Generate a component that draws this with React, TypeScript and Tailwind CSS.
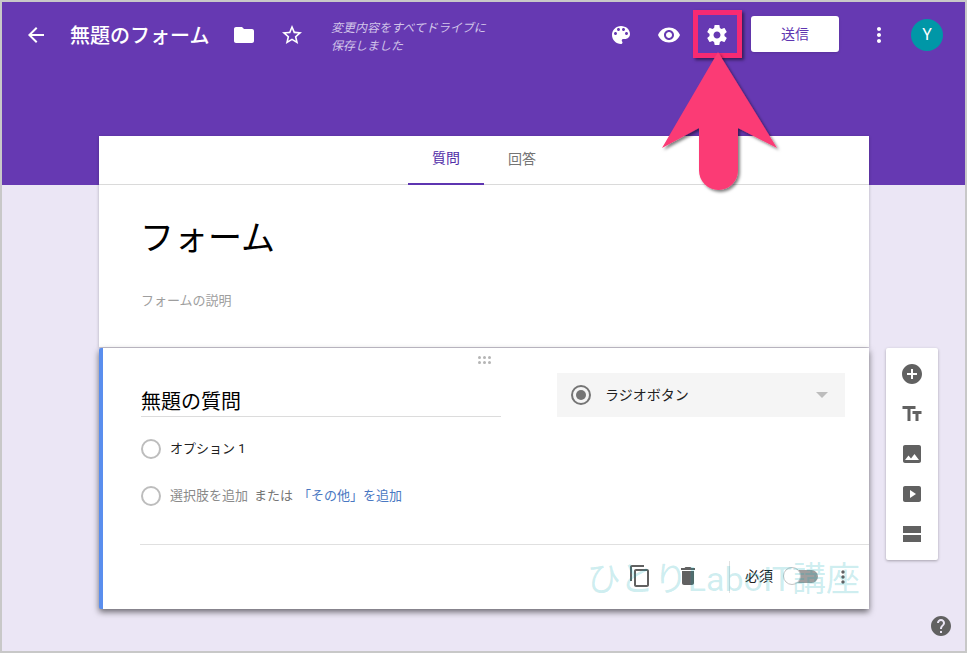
import React from "react";

const jp = "font-['Roboto','Noto_Sans_CJK_JP',sans-serif]";

function Icon({ d, className = "", size = 24 }: { d: string; className?: string; size?: number }) {
  return (
    <svg viewBox="0 0 24 24" width={size} height={size} className={className} fill="currentColor">
      <path d={d} />
    </svg>
  );
}

const paths = {
  back: "M20 11H7.83l5.59-5.59L12 4l-8 8 8 8 1.41-1.41L7.83 13H20v-2z",
  folder: "M10 4H4c-1.1 0-2 .9-2 2v12c0 1.1.9 2 2 2h16c1.1 0 2-.9 2-2V8c0-1.1-.9-2-2-2h-8l-2-2z",
  star: "M22 9.24l-7.19-.62L12 2 9.19 8.63 2 9.24l5.46 4.73L5.82 21 12 17.27 18.18 21l-1.63-7.03L22 9.24zM12 15.4l-3.76 2.27 1-4.28-3.32-2.88 4.38-.38L12 6.1l1.71 4.04 4.38.38-3.32 2.88 1 4.28L12 15.4z",
  palette: "M12 3c-4.97 0-9 4.03-9 9s4.03 9 9 9c.83 0 1.5-.67 1.5-1.5 0-.39-.15-.74-.39-1.01-.23-.26-.38-.61-.38-.99 0-.83.67-1.5 1.5-1.5H16c2.76 0 5-2.24 5-5 0-4.42-4.03-8-9-8zm-5.5 9c-.83 0-1.5-.67-1.5-1.5S5.67 9 6.5 9 8 9.67 8 10.5 7.33 12 6.5 12zm3-4C8.67 8 8 7.33 8 6.5S8.67 5 9.5 5s1.5.67 1.5 1.5S10.33 8 9.5 8zm5 0c-.83 0-1.5-.67-1.5-1.5S13.67 5 14.5 5s1.5.67 1.5 1.5S15.33 8 14.5 8zm3 4c-.83 0-1.5-.67-1.5-1.5S16.67 9 17.5 9s1.5.67 1.5 1.5-.67 1.5-1.5 1.5z",
  eye: "M12 4.5C7 4.5 2.73 7.61 1 12c1.73 4.39 6 7.5 11 7.5s9.27-3.11 11-7.5c-1.73-4.39-6-7.5-11-7.5zM12 17c-2.76 0-5-2.24-5-5s2.24-5 5-5 5 2.24 5 5-2.24 5-5 5zm0-8c-1.66 0-3 1.34-3 3s1.34 3 3 3 3-1.34 3-3-1.34-3-3-3z",
  gear: "M19.43 12.98c.04-.32.07-.64.07-.98s-.03-.66-.07-.98l2.11-1.65c.19-.15.24-.42.12-.64l-2-3.46c-.12-.22-.39-.3-.61-.22l-2.49 1c-.52-.4-1.08-.73-1.69-.98l-.38-2.65C14.46 2.18 14.25 2 14 2h-4c-.25 0-.46.18-.49.42l-.38 2.65c-.61.25-1.17.59-1.69.98l-2.49-1c-.23-.09-.49 0-.61.22l-2 3.46c-.13.22-.07.49.12.64l2.11 1.65c-.04.32-.07.65-.07.98s.03.66.07.98l-2.11 1.65c-.19.15-.24.42-.12.64l2 3.46c.12.22.39.3.61.22l2.49-1c.52.4 1.08.73 1.69.98l.38 2.65c.03.24.24.42.49.42h4c.25 0 .46-.18.49-.42l.38-2.65c.61-.25 1.17-.59 1.69-.98l2.49 1c.23.09.49 0 .61-.22l2-3.46c.12-.22.07-.49-.12-.64l-2.11-1.65zM12 15.5c-1.93 0-3.5-1.57-3.5-3.5s1.57-3.5 3.5-3.5 3.5 1.57 3.5 3.5-1.57 3.5-3.5 3.5z",
  dots: "M12 8c1.1 0 2-.9 2-2s-.9-2-2-2-2 .9-2 2 .9 2 2 2zm0 2c-1.1 0-2 .9-2 2s.9 2 2 2 2-.9 2-2-.9-2-2-2zm0 6c-1.1 0-2 .9-2 2s.9 2 2 2 2-.9 2-2-.9-2-2-2z",
  add: "M12 2C6.48 2 2 6.48 2 12s4.48 10 10 10 10-4.48 10-10S17.52 2 12 2zm5 11h-4v4h-2v-4H7v-2h4V7h2v4h4v2z",
  title: "M2.5 4v3h5v12h3V7h5V4h-13zm19 5h-9v3h3v7h3v-7h3V9z",
  image: "M21 19V5c0-1.1-.9-2-2-2H5c-1.1 0-2 .9-2 2v14c0 1.1.9 2 2 2h14c1.1 0 2-.9 2-2zM8.5 13.5l2.5 3.01L14.5 12l4.5 6H5l3.5-4.5z",
  video: "M19 4H5c-1.1 0-2 .9-2 2v12c0 1.1.9 2 2 2h14c1.1 0 2-.9 2-2V6c0-1.1-.9-2-2-2zm-9 12V8l6 4-6 4z",
  section: "M3 4h18v7H3zM3 13h18v7H3z",
  copy: "M16 1H4c-1.1 0-2 .9-2 2v14h2V3h12V1zm3 4H8c-1.1 0-2 .9-2 2v14c0 1.1.9 2 2 2h11c1.1 0 2-.9 2-2V7c0-1.1-.9-2-2-2zm0 16H8V7h11v14z",
  trash: "M6 19c0 1.1.9 2 2 2h8c1.1 0 2-.9 2-2V7H6v12zM19 4h-3.5l-1-1h-5l-1 1H5v2h14V4z",
  help: "M12 2C6.48 2 2 6.48 2 12s4.48 10 10 10 10-4.48 10-10S17.52 2 12 2zm1 17h-2v-2h2v2zm2.07-7.75l-.9.92C13.45 12.9 13 13.5 13 15h-2v-.5c0-1.1.45-2.1 1.17-2.83l1.24-1.26c.37-.36.59-.86.59-1.41 0-1.1-.9-2-2-2s-2 .9-2 2H8c0-2.21 1.79-4 4-4s4 1.79 4 4c0 .88-.36 1.68-.93 2.25z",
};

function Radio() {
  return <span className="w-5 h-5 rounded-full border-2 border-[#bdbdbd] shrink-0" />;
}

export default function App() {
  return (
    <div className={`${jp} relative w-[967px] h-[653px] overflow-hidden border-2 border-[#c8c8c8] bg-[#ebe6f5]`}>
      <header className="h-[183px] bg-[#6639b2] text-white">
        <div className="flex items-center h-[66px] pl-[22px]">
          <Icon d={paths.back} />
          <h1 className="ml-[22px] mt-[2px] text-[20px] font-medium leading-none w-[152px] whitespace-nowrap">無題のフォーム</h1>
          <Icon d={paths.folder} className="ml-[10px]" />
          <Icon d={paths.star} className="ml-[24px]" />
          <p className="ml-[27px] mt-[4px] w-[170px] text-[12px] leading-[18px] italic text-[#d1c4e9]">
            変更内容をすべてドライブに
            <br />
            保存しました
          </p>
          <Icon d={paths.palette} className="ml-[108px]" />
          <Icon d={paths.eye} className="ml-[24px]" />
          <Icon d={paths.gear} className="ml-[24px]" />
          <button className="ml-[22px] mb-[2px] w-[88px] h-[36px] rounded-[3px] bg-white text-[#5e35b1] text-[14px] shadow-sm">送信</button>
          <Icon d={paths.dots} className="ml-[28px]" />
          <span className="ml-[20px] w-8 h-8 rounded-full bg-[#0097a7] flex items-center justify-center text-[16px]">Y</span>
        </div>
      </header>

      <main className="relative -mt-[49px] ml-[97px] w-[770px]">
        <section className="bg-white shadow-[0_1px_3px_rgba(0,0,0,0.25)]">
          <nav className="flex justify-center h-[49px] border-b border-[#dadada] text-[14px]">
            <span className="w-[76px] flex items-center justify-center pb-[2px] text-[#512da8] border-b-2 border-[#5e35b1] h-[49px]">質問</span>
            <span className="w-[76px] flex items-center justify-center pb-[2px] text-[#757575]">回答</span>
          </nav>
          <div className="h-[162px] pl-[42px] pt-[30px]">
            <h2 className="-ml-px text-[34px] leading-[46px] text-black">フォーム</h2>
            <p className="mt-[32px] text-[13px] leading-[16px] text-[#9e9e9e]">フォームの説明</p>
          </div>
        </section>

        <section className="relative mt-[1px] h-[261px] bg-white border-l-4 border-[#5a8eee] rounded-l-[2px] shadow-[0_3px_6px_rgba(0,0,0,0.55)]">
          <div className="absolute left-[375px] top-[8px] grid grid-cols-3 gap-[2px]">
            {[0, 1, 2, 3, 4, 5].map((i) => (
              <span key={i} className="w-[3px] h-[3px] rounded-full bg-[#b5b5b5]" />
            ))}
          </div>
          <div className="flex pt-[25px] pl-[38px] pr-[24px]">
            <div className="w-[360px] h-[44px] border-b border-[#dcdcdc] flex items-end text-[20px] leading-[28px] text-black">無題の質問</div>
            <div className="ml-[56px] w-[288px] h-[44px] bg-[#f5f5f5] flex items-center pl-[14px] pr-[17px] text-[14px] text-[#212121]">
              <span className="w-5 h-5 rounded-full border-2 border-[#757575] flex items-center justify-center shrink-0">
                <span className="w-[10px] h-[10px] rounded-full bg-[#757575]" />
              </span>
              <span className="ml-[14px] flex-1">ラジオボタン</span>
              <span className="w-0 h-0 border-x-[6px] border-x-transparent border-t-[6px] border-t-[#bdbdbd]" />
            </div>
          </div>
          <div className="mt-[21px] pl-[38px] flex items-center h-[22px] text-[13px] text-[#212121]">
            <Radio />
            <span className="ml-[9px]">オプション 1</span>
          </div>
          <div className="mt-[25px] pl-[38px] flex items-center h-[22px] text-[13px]">
            <Radio />
            <span className="ml-[9px] text-[#8a8a8a]">選択肢を追加</span>
            <span className="ml-[6px] text-[#757575]">または</span>
            <span className="ml-[5px] text-[#4a78c2]">「その他」を追加</span>
          </div>
          <div className="ml-[37px] mt-[37px] h-[64px] border-t border-[#e0e0e0] flex items-center text-[#616161]">
            <div className="ml-auto flex items-center">
              <Icon d={paths.copy} className="mb-[2px]" />
              <Icon d={paths.trash} className="ml-[24px] mb-[2px]" />
              <span className="ml-[29px] w-px h-[32px] bg-[#e0e0e0]" />
              <span className="ml-[15px] text-[14px] text-[#212121]">必須</span>
              <span className="relative ml-[20px] w-[25px] h-[13px] rounded-full bg-[#9e9e9e]">
                <span className="absolute -left-[10px] -top-[3px] w-[18px] h-[18px] rounded-full bg-white border border-[#c4c4c4]" />
              </span>
              <Icon d={paths.dots} className="ml-[15px] mr-[16px]" size={20} />
            </div>
          </div>
          <div className="absolute right-[9px] bottom-[10px] text-[34px] leading-[40px] text-[#00a5b4]/20 whitespace-nowrap pointer-events-none">ひとりLaboIT講座</div>
        </section>
      </main>

      <aside className="absolute left-[884px] top-[346px] w-[52px] h-[212px] bg-white rounded-[2px] shadow-[0_1px_3px_rgba(0,0,0,0.3)] flex flex-col items-center justify-between py-[14px] text-[#616161]">
        <Icon d={paths.add} />
        <Icon d={paths.title} />
        <Icon d={paths.image} />
        <Icon d={paths.video} />
        <Icon d={paths.section} />
      </aside>

      <Icon d={paths.help} className="absolute left-[927px] top-[612px] text-[#616161]" />

      <div className="absolute left-[691px] top-[8px] w-[49px] h-[48px] border-[5px] border-[#f72a72] shadow-[2px_2px_3px_rgba(0,0,0,0.5)]" />
      <svg className="absolute left-[655px] top-[50px]" width="130" height="145" viewBox="0 0 130 145">
        <defs>
          <filter id="s" x="-20%" y="-20%" width="140%" height="140%">
            <feDropShadow dx="2" dy="2" stdDeviation="1.5" floodColor="#000" floodOpacity="0.5" />
          </filter>
        </defs>
        <path
          d="M61 0 L120 96 L81 76 L81 118.5 A19.5 19.5 0 0 1 42 118.5 L42 76 L5 96 Z"
          fill="#fb3a75"
          filter="url(#s)"
        />
      </svg>
    </div>
  );
}
